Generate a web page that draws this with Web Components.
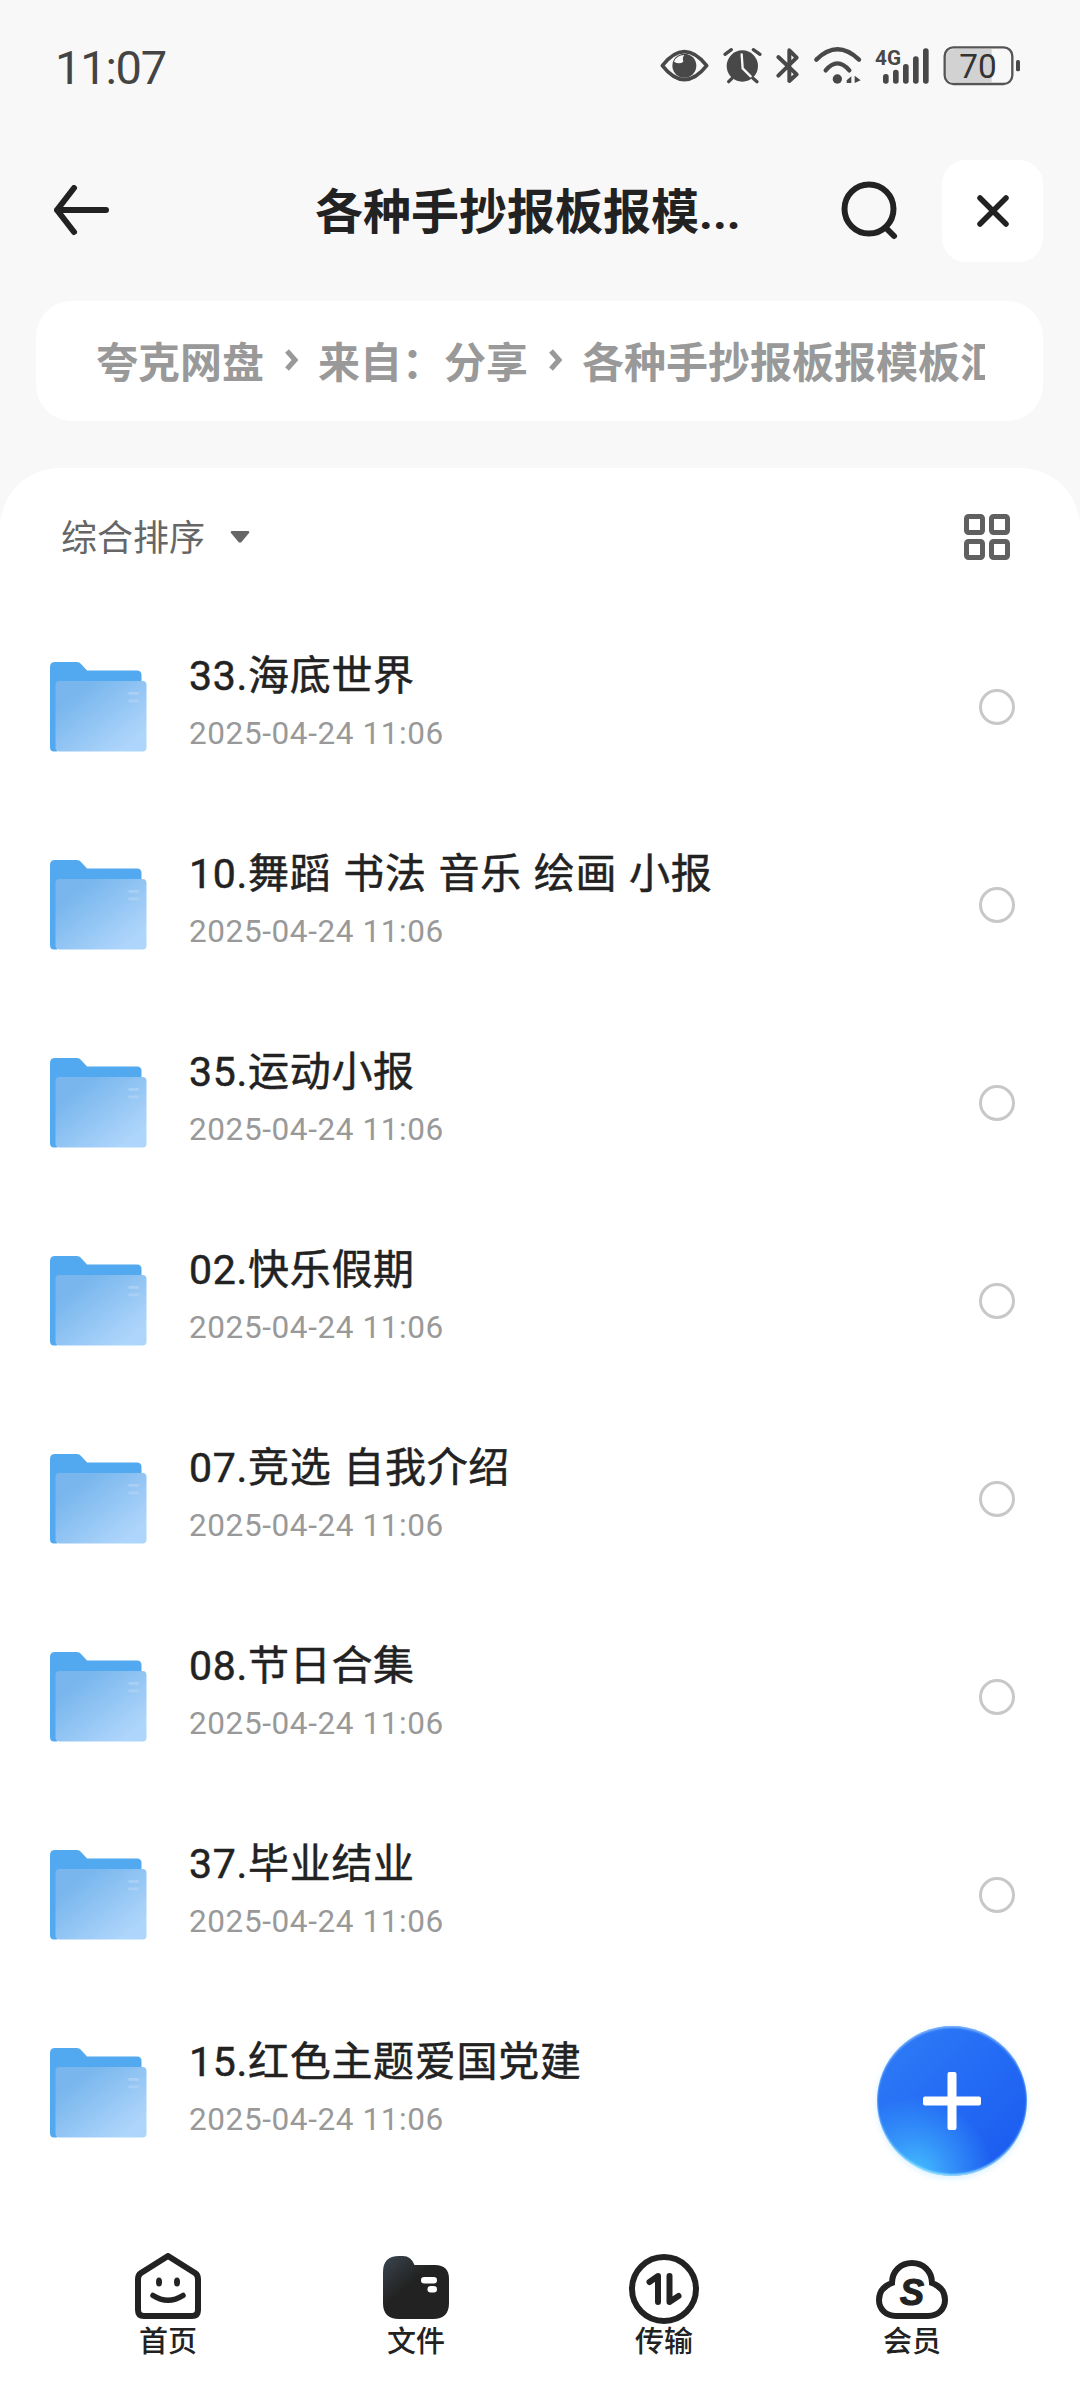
<!DOCTYPE html>
<html lang="zh">
<head>
<meta charset="utf-8">
<title>各种手抄报板报模板</title>
<style>
  html, body { margin: 0; height: 2388px; overflow: hidden; }
  body {
    background: #f8f8f8;
    font-family: Roboto, "Noto Sans CJK SC", sans-serif;
    display: flex;
    flex-direction: column;
  }
</style>
</head>
<body>
<status-bar time="11:07"></status-bar>
<nav-header title="各种手抄报板报模..."></nav-header>
<path-crumbs>
  <span>夸克网盘</span><span>来自：分享</span><span>各种手抄报板报模板汇</span>
</path-crumbs>
<file-sheet>
  <sort-bar label="综合排序"></sort-bar>
  <folder-row name="33.海底世界" date="2025-04-24 11:06"></folder-row>
  <folder-row name="10.舞蹈 书法 音乐 绘画 小报" date="2025-04-24 11:06"></folder-row>
  <folder-row name="35.运动小报" date="2025-04-24 11:06"></folder-row>
  <folder-row name="02.快乐假期" date="2025-04-24 11:06"></folder-row>
  <folder-row name="07.竞选 自我介绍" date="2025-04-24 11:06"></folder-row>
  <folder-row name="08.节日合集" date="2025-04-24 11:06"></folder-row>
  <folder-row name="37.毕业结业" date="2025-04-24 11:06"></folder-row>
  <folder-row name="15.红色主题爱国党建" date="2025-04-24 11:06"></folder-row>
</file-sheet>
<add-fab></add-fab>
<tab-bar>
  <tab-item label="首页">
    <svg width="80" height="72" viewBox="0 0 80 72" fill="none" stroke="#222">
      <path stroke-width="6" stroke-linejoin="round" d="M40 3 L67 20 Q70 22 70 26 V57 Q70 63 64 63 H16 Q10 63 10 57 V26 Q10 22 13 20 Z"/>
      <ellipse cx="31" cy="29" rx="3" ry="4.6" fill="#222" stroke="none"/>
      <ellipse cx="49" cy="29" rx="3" ry="4.6" fill="#222" stroke="none"/>
      <path stroke-width="5.5" stroke-linecap="round" d="M25 42.5 Q40 52 55 42.5"/>
    </svg>
  </tab-item>
  <tab-item label="文件">
    <svg width="80" height="72" viewBox="0 0 80 72">
      <defs>
        <linearGradient id="fileGrad" x1="0" y1="0" x2="0.75" y2="0.8">
          <stop offset="0" stop-color="#3b4650"/>
          <stop offset="0.55" stop-color="#222"/>
        </linearGradient>
      </defs>
      <path fill="url(#fileGrad)" d="M7 19 Q7 3 23 3 H27 Q35 3 38.5 12 H59 Q73 12 73 26 V50 Q73 66 57 66 H23 Q7 66 7 50 Z"/>
      <rect x="45" y="24" width="16" height="6.5" rx="3.2" fill="#fff"/>
      <rect x="51.5" y="33" width="9.5" height="6.5" rx="3.2" fill="#fff"/>
    </svg>
  </tab-item>
  <tab-item label="传输">
    <svg width="80" height="72" viewBox="0 0 80 72" fill="none" stroke="#222">
      <circle cx="40" cy="36" r="32" stroke-width="6"/>
      <path stroke-width="6" stroke-linecap="round" stroke-linejoin="round" d="M34 49 V23 L25.5 29"/>
      <path stroke-width="6" stroke-linecap="round" stroke-linejoin="round" d="M45.5 23 V49 L54.5 43"/>
    </svg>
  </tab-item>
  <tab-item label="会员">
    <svg width="80" height="72" viewBox="0 0 80 72" fill="none" stroke="#222">
      <path stroke-width="6" d="M24 63 H56 C66 63 73 56 73 47 C73 38 68 33 60 30 C60 18 51 10 40 10 C29 10 20 18 20 30 C12 33 7 39 7 47 C7 56 14 63 24 63 Z"/>
      <text x="40" y="52" text-anchor="middle" font-family="Liberation Sans, sans-serif" font-size="36" font-weight="700" font-style="italic" fill="#222" stroke="#222" stroke-width="1.2">S</text>
    </svg>
  </tab-item>
</tab-bar>

<script>
class StatusBar extends HTMLElement {
  constructor() {
    super();
    this.attachShadow({ mode: "open" });
    this.shadowRoot.innerHTML = `
      <style>
        :host {
          display: flex;
          justify-content: space-between;
          align-items: center;
          height: 120px;
          flex: none;
          padding: 7px 30px 0 55px;
          box-sizing: border-box;
          color: #444;
        }
        #time {
          font: 400 47px Roboto, sans-serif;
          letter-spacing: -1.2px;
          margin-top: 8px;
        }
        svg { display: block; }
      </style>
      <span id="time"></span>
      <svg width="420" height="90" viewBox="0 0 1260 270" fill="none" stroke="#484848">
        <!-- eye -->
        <path stroke-width="11" stroke-linejoin="round" d="M97 140 Q130 98 163 98 Q197 98 230 140 Q197 182 163 182 Q130 182 97 140 Z"/>
        <circle cx="163" cy="140" r="36" fill="#484848" stroke="none"/>
        <path fill="#f8f8f8" stroke="none" d="M132 128 Q140 108 163 108 Q156 116 160 128 Q148 138 132 128 Z"/>
        <!-- alarm -->
        <circle cx="337" cy="141" r="47" fill="#484848" stroke="none"/>
        <path stroke="#f8f8f8" stroke-width="7" stroke-linecap="round" stroke-linejoin="round" d="M335 106 L338 148 L362 172"/>
        <path stroke-width="10" stroke-linecap="round" d="M285 106 L304 92 M370 92 L390 106 M296 188 L306 178 M369 178 L381 188"/>
        <!-- bluetooth -->
        <path stroke-width="12" stroke-linecap="round" stroke-linejoin="round" d="M445 114 L500 166 L478 186 V94 L500 116 L445 170"/>
        <!-- wifi -->
        <path stroke-width="13" stroke-linecap="round" d="M559 122 Q622 60 687 122"/>
        <path stroke-width="13" stroke-linecap="round" d="M587 154 Q622 112 658 154"/>
        <circle cx="622" cy="180" r="14" fill="#484848" stroke="none"/>
        <path fill="#484848" stroke="none" d="M650 184 L664 172 V192 H650 Z M674 170 L692 184 L674 192 Z"/>
        <!-- 4G and bars -->
        <text x="735" y="139" font-family="Roboto, sans-serif" font-size="58" font-weight="700" fill="#484848" stroke="none" textLength="78" lengthAdjust="spacingAndGlyphs">4G</text>
        <g fill="#484848" stroke="none">
          <rect x="759" y="165" width="17" height="29" rx="8"/>
          <rect x="789" y="152" width="17" height="42" rx="8"/>
          <rect x="819" y="135" width="17" height="59" rx="8"/>
          <rect x="849" y="112" width="17" height="82" rx="8"/>
          <rect x="879" y="88" width="17" height="106" rx="8"/>
        </g>
        <!-- battery -->
        <path fill="#d2d2d2" stroke="none" d="M975 90 H1085 V190 H975 Q948 190 948 165 V115 Q948 90 975 90 Z"/>
        <rect x="944" y="85" width="203" height="110" rx="26" stroke="#555" stroke-width="7"/>
        <rect x="1158" y="123" width="12" height="34" rx="5" fill="#484848" stroke="none"/>
        <text x="1044" y="178" text-anchor="middle" font-family="Roboto, sans-serif" font-size="100" fill="#333" stroke="none">70</text>
      </svg>
    `;
    this.shadowRoot.getElementById("time").textContent = this.getAttribute("time");
  }
}

class NavHeader extends HTMLElement {
  constructor() {
    super();
    this.attachShadow({ mode: "open" });
    this.shadowRoot.innerHTML = `
      <style>
        :host {
          display: flex;
          align-items: center;
          flex: none;
          height: 102px;
          margin-top: 40px;
          padding: 0 37px 0 50px;
          box-sizing: border-box;
          color: #222;
        }
        #back { flex: none; display: block; }
        #title {
          flex: 1;
          text-align: left;
          padding: 0 0 7px 203px;
          font: 700 48px Roboto, "Noto Sans CJK SC", sans-serif;
          white-space: nowrap;
        }
        #search { flex: none; display: block; margin-right: 42px; }
        #close {
          flex: none;
          width: 101px;
          height: 102px;
          border-radius: 24px;
          background: #fff;
          display: flex;
          align-items: center;
          justify-content: center;
        }
      </style>
      <svg id="back" width="62" height="52" viewBox="0 0 62 52" fill="none" stroke="#222" stroke-width="6" stroke-linecap="round" stroke-linejoin="round">
        <path d="M56 25 H7 M24 3 L7 25 L24 47"/>
      </svg>
      <div id="title"></div>
      <svg id="search" width="60" height="60" viewBox="0 0 60 60" fill="none" stroke="#222" stroke-width="6" stroke-linecap="round">
        <circle cx="29" cy="28" r="24.5"/>
        <path d="M46 47 L54 55"/>
      </svg>
      <div id="close">
        <svg width="36" height="36" viewBox="0 0 36 36" fill="none" stroke="#222" stroke-width="5.5" stroke-linecap="round">
          <path d="M5 5 L31 31 M31 5 L5 31"/>
        </svg>
      </div>
    `;
    this.shadowRoot.getElementById("title").textContent = this.getAttribute("title");
  }
}

class PathCrumbs extends HTMLElement {
  constructor() {
    super();
    this.attachShadow({ mode: "open" });
    this.shadowRoot.innerHTML = `
      <style>
        :host {
          display: block;
          flex: none;
          height: 120px;
          margin: 39px 37px 0 36px;
          padding: 0 58px 3px 60px;
          box-sizing: border-box;
          border-radius: 36px;
          background: #fff;
          color: #999;
          font: 700 42px "Noto Sans CJK SC", sans-serif;
        }
        #trail {
          height: 100%;
          display: flex;
          align-items: center;
          overflow: hidden;
          white-space: nowrap;
        }
        svg { flex: none; margin: 0 20px; }
        ::slotted(span) { flex: none; }
      </style>
      <div id="trail"></div>
    `;
    const chevron = () => {
      const s = document.createElementNS("http://www.w3.org/2000/svg", "svg");
      s.setAttribute("width", "14");
      s.setAttribute("height", "22");
      s.setAttribute("viewBox", "0 0 14 22");
      s.innerHTML = '<path d="M3 2 L11 11 L3 20" fill="none" stroke="#999" stroke-width="5"/>';
      return s;
    };
    // chevrons sit between the slotted crumbs
    const crumbs = [...this.children];
    const trail = this.shadowRoot.getElementById("trail");
    crumbs.forEach((c, i) => {
      c.slot = "c" + i;
      const slot = document.createElement("slot");
      slot.name = "c" + i;
      trail.appendChild(slot);
      if (i < crumbs.length - 1) trail.appendChild(chevron());
    });
  }
}

class FileSheet extends HTMLElement {
  constructor() {
    super();
    this.attachShadow({ mode: "open" });
    this.shadowRoot.innerHTML = `
      <style>
        :host {
          display: block;
          flex: 1;
          min-height: 0;
          margin-top: 47px;
          border-radius: 60px 60px 0 0;
          background: #fff;
          overflow: hidden;
        }
      </style>
      <slot></slot>
    `;
  }
}

class SortBar extends HTMLElement {
  constructor() {
    super();
    this.attachShadow({ mode: "open" });
    this.shadowRoot.innerHTML = `
      <style>
        :host {
          display: flex;
          align-items: center;
          height: 134px;
          margin-bottom: 6px;
          padding: 0 70px 0 61px;
          box-sizing: border-box;
          color: #666;
          font: 400 36px "Noto Sans CJK SC", sans-serif;
        }
        #label { flex: none; }
        #arrow { flex: none; margin-left: 24px; margin-top: 3px; display: block; }
        #grid { flex: none; margin-left: auto; margin-top: 3px; display: block; }
      </style>
      <span id="label"></span>
      <svg id="arrow" width="22" height="16" viewBox="0 0 22 16"><path d="M3 2 H19 Q21 2 20 4 L12.5 13 Q11 14.5 9.5 13 L2 4 Q1 2 3 2 Z" fill="#666"/></svg>
      <svg id="grid" width="46" height="46" viewBox="0 0 46 46" fill="none" stroke="#606060" stroke-width="5">
        <rect x="2.5" y="2.5" width="16" height="16" rx="2"/>
        <rect x="27.5" y="2.5" width="16" height="16" rx="2"/>
        <rect x="2.5" y="27.5" width="16" height="16" rx="2"/>
        <rect x="27.5" y="27.5" width="16" height="16" rx="2"/>
      </svg>
    `;
    this.shadowRoot.getElementById("label").textContent = this.getAttribute("label");
  }
}

let folderCount = 0;

class FolderRow extends HTMLElement {
  constructor() {
    super();
    this.attachShadow({ mode: "open" });
    const gid = "front" + folderCount++;
    this.shadowRoot.innerHTML = `
      <style>
        :host {
          display: flex;
          align-items: center;
          height: 198px;
          padding: 0 65px 0 50px;
          box-sizing: border-box;
        }
        #icon { flex: none; display: block; }
        #text {
          flex: 1;
          min-width: 0;
          margin-left: 41px;
          padding-bottom: 10px;
        }
        #name {
          color: #222;
          font: 400 41px/50px Roboto, "Noto Sans CJK SC", sans-serif;
          -webkit-text-stroke: 0.5px #222;
          letter-spacing: 0.7px;
          word-spacing: 1px;
          white-space: nowrap;
        }
        #date {
          margin-top: 13px;
          color: #999;
          font: 400 31.5px/40px Roboto, sans-serif;
          letter-spacing: 0.6px;
        }
        #pick {
          flex: none;
          width: 36px;
          height: 36px;
          box-sizing: border-box;
          border: 3px solid #c8c8c8;
          border-radius: 50%;
        }
      </style>
      <svg id="icon" width="98" height="90" viewBox="0 0 98 90">
        <defs>
          <linearGradient id="${gid}" x1="0" y1="0" x2="1" y2="1">
            <stop offset="0.2" stop-color="#78b6ed"/>
            <stop offset="0.85" stop-color="#aed5fb"/>
          </linearGradient>
        </defs>
        <path fill="#53a9f0" d="M0 5 Q0 0 5 0 H27 Q30 0 32 3 L37 8.5 H87 Q91.5 8.5 91.5 13 V40 H7 V89.5 H4 Q0 89.5 0 85 Z"/>
        <rect x="5.5" y="19" width="91" height="70.5" rx="4" fill="url(#${gid})"/>
        <rect x="78.5" y="30" width="10.5" height="2.8" fill="#a9d0f4"/>
        <rect x="78.5" y="37.5" width="10.5" height="2.8" fill="#a9d0f4"/>
      </svg>
      <div id="text">
        <div id="name"></div>
        <div id="date"></div>
      </div>
      <div id="pick"></div>
    `;
    this.shadowRoot.getElementById("name").textContent = this.getAttribute("name");
    this.shadowRoot.getElementById("date").textContent = this.getAttribute("date");
  }
}

class AddFab extends HTMLElement {
  constructor() {
    super();
    this.attachShadow({ mode: "open" });
    this.shadowRoot.innerHTML = `
      <style>
        :host {
          display: flex;
          align-items: center;
          justify-content: center;
          position: absolute;
          left: 877px;
          top: 2026px;
          width: 150px;
          height: 150px;
          border-radius: 50%;
          background:
            radial-gradient(circle at 25% 100%, #46c2ff 0, rgba(70,190,255,.5) 20%, rgba(60,150,255,0) 42%),
            linear-gradient(135deg, #2f7ef7 0, #2269f4 55%, #1a58ee 100%);
          box-shadow: inset 0 2px 2px rgba(150,200,255,.7), inset 0 -2px 2px rgba(160,235,255,.8), 0 2px 6px rgba(90,200,255,.25);
        }
        svg { display: block; }
      </style>
      <svg width="58" height="58" viewBox="0 0 58 58"><path fill="#fff" d="M24.5 2 Q24.5 0 26.5 0 H31.5 Q33.5 0 33.5 2 V24.5 H56 Q58 24.5 58 26.5 V31.5 Q58 33.5 56 33.5 H33.5 V56 Q33.5 58 31.5 58 H26.5 Q24.5 58 24.5 56 V33.5 H2 Q0 33.5 0 31.5 V26.5 Q0 24.5 2 24.5 H24.5 Z"/></svg>
    `;
  }
}

class TabBar extends HTMLElement {
  constructor() {
    super();
    this.attachShadow({ mode: "open" });
    this.shadowRoot.innerHTML = `
      <style>
        :host {
          display: grid;
          grid-template-columns: repeat(4, 248px);
          flex: none;
          height: 135px;
          padding: 0 44px 0 44px;
          background: #fff;
          box-sizing: border-box;
        }
      </style>
      <slot></slot>
    `;
  }
}

class TabItem extends HTMLElement {
  constructor() {
    super();
    this.attachShadow({ mode: "open" });
    this.shadowRoot.innerHTML = `
      <style>
        :host {
          display: flex;
          flex-direction: column;
          align-items: center;
          color: #222;
        }
        #label {
          margin-top: -4px;
          font: 500 29px/36px "Noto Sans CJK SC", sans-serif;
        }
      </style>
      <slot></slot>
      <span id="label"></span>
    `;
    this.shadowRoot.getElementById("label").textContent = this.getAttribute("label");
  }
}

customElements.define("status-bar", StatusBar);
customElements.define("nav-header", NavHeader);
customElements.define("path-crumbs", PathCrumbs);
customElements.define("file-sheet", FileSheet);
customElements.define("sort-bar", SortBar);
customElements.define("folder-row", FolderRow);
customElements.define("add-fab", AddFab);
customElements.define("tab-bar", TabBar);
customElements.define("tab-item", TabItem);
</script>
</body>
</html>
